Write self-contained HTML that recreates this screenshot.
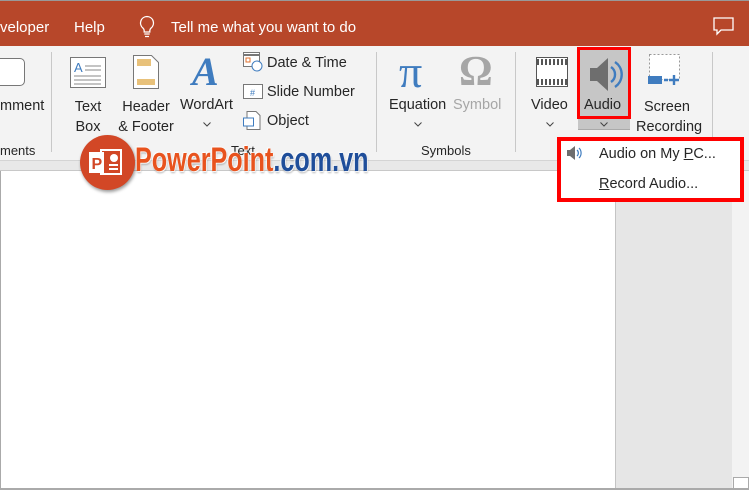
<!DOCTYPE html>
<html><head><meta charset="utf-8"><style>
*{margin:0;padding:0;box-sizing:border-box}
body{width:749px;height:490px;overflow:hidden;position:relative;background:#fff;font-family:"Liberation Sans",sans-serif;color:#262626}
.a{position:absolute}
.t{font-size:14.5px;white-space:nowrap}
.c{text-align:center}
.ch{position:absolute;width:8px;height:5px}
</style></head><body>
<div class="a" style="left:0;top:0;width:749px;height:46px;background:#B7472A;border-top:1px solid #999"></div>
<div class="a t" style="left:0;top:19px;color:#fff;font-size:15px">veloper</div>
<div class="a t" style="left:74px;top:19px;color:#fff;font-size:15px">Help</div>
<svg class="a" style="left:138px;top:15px" width="18" height="24" viewBox="0 0 18 24"><path d="M9 1.5a6.5 6.5 0 0 0-4 11.6c.8.7 1.2 1.6 1.2 2.6v1.3h5.6v-1.3c0-1 .4-1.9 1.2-2.6A6.5 6.5 0 0 0 9 1.5zM6.3 19h5.4M7 21.5h4" fill="none" stroke="#fff" stroke-width="1.3"/></svg>
<div class="a t" style="left:171px;top:19px;color:#fff;font-size:15px">Tell me what you want to do</div>
<svg class="a" style="left:713px;top:17px" width="22" height="20" viewBox="0 0 22 20"><path d="M1 1h19v12H8l-4 4v-4H1z" fill="none" stroke="#fff" stroke-width="1.3"/></svg>

<div class="a" style="left:0;top:46px;width:749px;height:114px;background:#F3F3F3"></div>
<div class="a" style="left:0;top:160px;width:749px;height:11px;background:#E8E8E8;border-top:1px solid #d4d4d4;border-bottom:1px solid #c8c8c8"></div>
<div class="a" style="left:51px;top:52px;width:1px;height:100px;background:#c8c8c8"></div>
<div class="a" style="left:376px;top:52px;width:1px;height:100px;background:#c8c8c8"></div>
<div class="a" style="left:515px;top:52px;width:1px;height:100px;background:#c8c8c8"></div>
<div class="a" style="left:712px;top:52px;width:1px;height:100px;background:#c8c8c8"></div>

<div class="a" style="left:-6px;top:58px;width:31px;height:28px;border:1.5px solid #777;border-radius:5px;background:#fff"></div>
<div class="a t" style="left:0;top:98px">mment</div>
<div class="a t" style="left:0;top:143px;font-size:13px">ments</div>

<svg class="a" style="left:70px;top:57px" width="36" height="31"><rect x="0.5" y="0.5" width="35" height="30" fill="#fff" stroke="#777"/><text x="4" y="15" font-size="13" fill="#3F7CBF" font-family="Liberation Sans">A</text><path d="M15 9h16M15 13h16M4 19h27M4 23h27M4 27h27" stroke="#888"/></svg>
<div class="a t c" style="left:70px;top:97px;width:36px;line-height:20px">Text<br>Box</div>

<svg class="a" style="left:133px;top:55px" width="26" height="34"><path d="M0.5 .5h18l7 7v26H.5z" fill="#fff" stroke="#777"/><rect x="4" y="4" width="14" height="7" fill="#E8C17A"/><rect x="4" y="24" width="18" height="6" fill="#E8C17A"/></svg>
<div class="a t c" style="left:114px;top:97px;width:64px;line-height:20px">Header<br>&amp; Footer</div>

<div class="a" style="left:192px;top:48px;font-size:40px;font-style:italic;font-weight:bold;color:#3F7CBF;font-family:'Liberation Serif',serif">A</div>
<div class="a t" style="left:180px;top:97px">WordArt</div>
<svg class="ch" style="left:203px;top:122px" viewBox="0 0 8 5"><path d="M.5.5l3.5 3.5 3.5-3.5" fill="none" stroke="#444"/></svg>

<svg class="a" style="left:243px;top:52px" width="20" height="20"><rect x=".5" y=".5" width="16" height="14" fill="#fff" stroke="#777"/><path d="M1 3h15" stroke="#777" stroke-width="2"/><rect x="3" y="6" width="4" height="4" fill="none" stroke="#E0702E"/><circle cx="14" cy="14" r="5" fill="#fff" stroke="#3F7CBF"/></svg>
<div class="a t" style="left:267px;top:55px">Date &amp; Time</div>
<svg class="a" style="left:243px;top:84px" width="20" height="16"><rect x=".5" y=".5" width="19" height="14" fill="#fff" stroke="#777"/><text x="7" y="12" font-size="9" fill="#3F7CBF">#</text></svg>
<div class="a t" style="left:267px;top:84px">Slide Number</div>
<svg class="a" style="left:243px;top:111px" width="18" height="20"><path d="M4 .5h9l4 4v14H4z" fill="#fff" stroke="#777"/><rect x=".5" y="7" width="10" height="8" fill="#fff" stroke="#3F7CBF"/></svg>
<div class="a t" style="left:267px;top:113px">Object</div>
<div class="a" style="left:231px;top:143px;font-size:13px">Text</div>

<div class="a" style="left:399px;top:45px;font-size:46px;color:#3F7CBF;font-family:'Liberation Serif',serif">π</div>
<div class="a" style="left:459px;top:48px;font-size:42px;color:#A6A6A6;font-family:'Liberation Serif',serif;font-weight:bold">Ω</div>
<div class="a t" style="left:389px;top:97px">Equation</div>
<div class="a t" style="left:453px;top:97px;color:#A6A6A6">Symbol</div>
<svg class="ch" style="left:414px;top:122px" viewBox="0 0 8 5"><path d="M.5.5l3.5 3.5 3.5-3.5" fill="none" stroke="#444"/></svg>
<div class="a" style="left:421px;top:143px;font-size:13px">Symbols</div>

<svg class="a" style="left:536px;top:57px" width="32" height="30"><rect x=".5" y=".5" width="31" height="29" fill="#fff" stroke="#555"/><path d="M1 5h30M1 25h30" stroke="#555" stroke-width="6" stroke-dasharray="2 2"/><rect x="1" y="8" width="30" height="14" fill="#fff"/></svg>
<div class="a t" style="left:531px;top:97px">Video</div>
<svg class="ch" style="left:546px;top:122px" viewBox="0 0 8 5"><path d="M.5.5l3.5 3.5 3.5-3.5" fill="none" stroke="#444"/></svg>

<div class="a" style="left:578px;top:47px;width:52px;height:83px;background:#C6C6C6;border-bottom:1px solid #aaa"></div>
<div class="a" style="left:577px;top:47px;width:54px;height:72px;border:3px solid #f00"></div>
<svg class="a" style="left:588px;top:55px" width="36" height="40"><path d="M2 13h7l11-10v33L9 26H2z" fill="#6e6e6e"/><path d="M23 12a9 9 0 0 1 0 15M27 7a15 15 0 0 1 0 25" fill="none" stroke="#3F7CBF" stroke-width="2.4"/></svg>
<div class="a t" style="left:584px;top:97px">Audio</div>
<svg class="ch" style="left:600px;top:122px" viewBox="0 0 8 5"><path d="M.5.5l3.5 3.5 3.5-3.5" fill="none" stroke="#444"/></svg>

<svg class="a" style="left:647px;top:54px" width="38" height="34"><rect x="2.5" y=".5" width="30" height="25" fill="#fff" stroke="#999" stroke-dasharray="2 2"/><rect x="1" y="22" width="14" height="8" fill="#3F7CBF"/><path d="M17 26h4M27 21v10M22 26h10" stroke="#3F7CBF" stroke-width="2.4"/></svg>
<div class="a t c" style="left:636px;top:97px;width:62px;line-height:20px">Screen<br>Recording</div>

<div class="a" style="left:615px;top:171px;width:117px;height:319px;background:#E6E6E6;border-left:1px solid #c4c4c4"></div>
<div class="a" style="left:732px;top:171px;width:17px;height:319px;background:#F3F3F3"></div>
<div class="a" style="left:733px;top:477px;width:16px;height:13px;background:#fff;border:1px solid #aaa"></div>
<div class="a" style="left:0;top:488px;width:749px;height:2px;background:#aaa"></div>
<div class="a" style="left:0;top:171px;width:1px;height:319px;background:#aaa"></div>

<div class="a" style="left:557px;top:137px;width:187px;height:65px;background:#fff;border:4px solid #f00"></div>
<svg class="a" style="left:566px;top:146px" width="16" height="14"><path d="M1 4h3l5-4v14L4 10H1z" fill="#6e6e6e"/><path d="M11 4a4 4 0 0 1 0 6M13 2a7 7 0 0 1 0 10" fill="none" stroke="#3F7CBF" stroke-width="1.2"/></svg>
<div class="a t" style="left:599px;top:146px">Audio on My <u>P</u>C...</div>
<div class="a t" style="left:599px;top:176px"><u>R</u>ecord Audio...</div>

<div class="a" style="left:80px;top:135px;width:55px;height:55px;border-radius:50%;background:#D24726;box-shadow:1px 2px 3px rgba(0,0,0,.4)"></div>
<svg class="a" style="left:87px;top:148px" width="42" height="30"><rect x="14" y="2" width="20" height="24" fill="none" stroke="#fff" stroke-width="2"/><circle cx="27" cy="10" r="4" fill="#fff"/><path d="M22 17h9M22 21h9" stroke="#fff" stroke-width="2"/><rect x="2" y="4" width="15" height="21" fill="#fff"/><text x="4.5" y="21" font-size="16" font-weight="bold" fill="#D24726" font-family="Liberation Sans">P</text></svg>
<div class="a" style="left:135px;top:141px;font-size:34px;font-weight:bold;white-space:nowrap;transform:scaleX(.74);transform-origin:left top;font-family:'Liberation Sans Narrow','Liberation Sans',sans-serif;text-shadow:1px 1px 1px #fff,-1px -1px 1px #fff,1px 2px 2px rgba(0,0,0,.3)"><span style="color:#E8531E">PowerPoint</span><span style="color:#1F4E9A">.com.vn</span></div>
</body></html>
